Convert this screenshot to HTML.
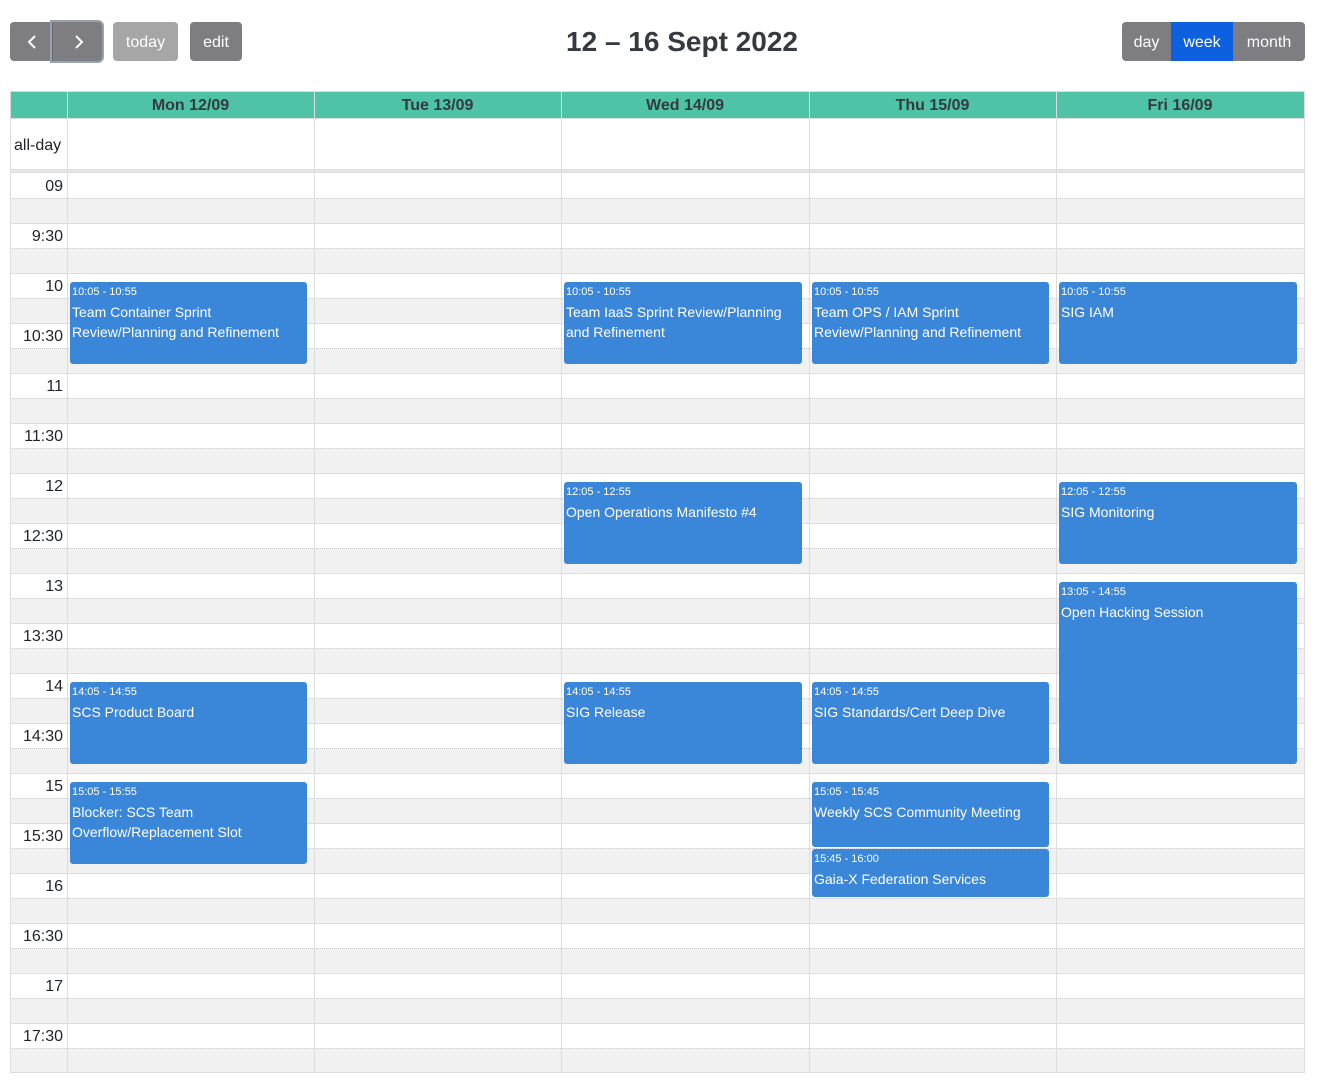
<!DOCTYPE html>
<html><head><meta charset="utf-8"><style>
*{box-sizing:border-box;margin:0;padding:0}
body{width:1322px;height:1085px;background:#fff;font-family:"Liberation Sans","DejaVu Sans",sans-serif;color:#212529;position:relative;overflow:hidden}
.btn{position:absolute;top:22px;height:39px;background:#7e7d82;color:#fff;font-size:16px;line-height:41px;text-align:center;border-radius:4px}
.abs{position:absolute}
.ev{position:absolute;background:#3a87d9;border:1px solid #3a87d9;border-radius:3px;color:#fff;padding:2px 1px;overflow:hidden}
.ev .t{font-size:11px;line-height:14px;margin-bottom:3px}
.ev .n{font-size:14px;line-height:20px}
.lbl{position:absolute;left:10px;width:53px;text-align:right;font-size:16px;color:#212529}
</style></head><body>
<div class="btn" style="left:10px;width:42px;border-radius:4px 0 0 4px"><svg width="42" height="39"><path d="M25 14 L19 20 L25 26" stroke="#fff" stroke-width="2" fill="none"/></svg></div>
<div class="btn" style="left:52px;width:50px;border-radius:0 4px 4px 0;box-shadow:0 0 0 2px #9aa3ad;border-left:1px solid #5f666d"><svg width="48" height="39"><path d="M22 14 L28 20 L22 26" stroke="#fff" stroke-width="2" fill="none"/></svg></div>
<div class="btn" style="left:113px;width:65px;background:#a6a6a7">today</div>
<div class="btn" style="left:190px;width:52px">edit</div>
<div class="abs" style="left:21px;width:1322px;top:22px;text-align:center;font-size:28px;font-weight:bold;color:#343a40;line-height:39px">12 – 16 Sept 2022</div>
<div class="btn" style="left:1122px;width:49px;border-radius:4px 0 0 4px">day</div>
<div class="btn" style="left:1171px;width:62px;border-radius:0;background:#0d61e0">week</div>
<div class="btn" style="left:1233px;width:72px;border-radius:0 4px 4px 0">month</div>

<div class="abs" style="left:10px;top:91px;width:1295px;height:28px;background:#4fc3a6;border:1px solid #ddd"></div>
<div class="abs" style="left:10px;top:119px;width:1295px;height:51px;border:1px solid #ddd;border-top:none"></div>
<div class="abs" style="left:14px;top:137px;font-size:16px">all-day</div>
<div class="abs" style="left:10px;top:169px;width:1295px;height:4px;background:#e6e6e6;border-top:1px solid #ddd;border-bottom:1px solid #ddd"></div>
<div id="grid"></div>
<script>
var cols=[67,314,561,809,1056,1304],names=["Mon 12/09","Tue 13/09","Wed 14/09","Thu 15/09","Fri 16/09"];
var h='';
for(var i=0;i<18;i++){var y=173+i*50;
h+='<div class="abs" style="left:10px;top:'+y+'px;width:1295px;height:50px;border-top:'+(i?'1px solid #ddd':'none')+'"></div>';
h+='<div class="abs" style="left:10px;top:'+(y+25)+'px;width:1295px;height:25px;background:#f1f1f1;border-top:1px dotted #ccc"></div>';
var hr=9+Math.floor(i/2),lab=(i%2)?hr+':30':(hr==9?'09':''+hr);
h+='<div class="lbl" style="top:'+(y+5)+'px">'+lab+'</div>';}
h+='<div class="abs" style="left:10px;top:173px;width:1295px;height:900px;border:1px solid #ddd;border-top:none"></div>';
for(var c=0;c<6;c++){h+='<div class="abs" style="left:'+cols[c]+'px;top:91px;width:1px;height:982px;background:#ddd"></div>';
if(c<5)h+='<div class="abs" style="left:'+cols[c]+'px;top:97px;width:'+(cols[c+1]-cols[c])+'px;text-align:center;font-size:16px;font-weight:bold;color:#343a40">'+names[c]+'</div>';}
function ev(c,s,e,t,n){var y1=173+s/30*50,y2=173+e/30*50;
h+='<div class="ev" style="left:'+(cols[c]+3)+'px;top:'+(y1+1)+'px;width:'+(cols[c+1]-cols[c]-10)+'px;height:'+(y2-y1-2)+'px"><div class="t">'+t+'</div><div class="n">'+n+'</div></div>';}
ev(0,65,115,'10:05 - 10:55','Team Container Sprint Review/Planning and Refinement');
ev(2,65,115,'10:05 - 10:55','Team IaaS Sprint Review/Planning and Refinement');
ev(3,65,115,'10:05 - 10:55','Team OPS / IAM Sprint Review/Planning and Refinement');
ev(4,65,115,'10:05 - 10:55','SIG IAM');
ev(2,185,235,'12:05 - 12:55','Open Operations Manifesto #4');
ev(4,185,235,'12:05 - 12:55','SIG Monitoring');
ev(4,245,355,'13:05 - 14:55','Open Hacking Session');
ev(0,305,355,'14:05 - 14:55','SCS Product Board');
ev(2,305,355,'14:05 - 14:55','SIG Release');
ev(3,305,355,'14:05 - 14:55','SIG Standards/Cert Deep Dive');
ev(0,365,415,'15:05 - 15:55','Blocker: SCS Team Overflow/Replacement Slot');
ev(3,365,405,'15:05 - 15:45','Weekly SCS Community Meeting');
ev(3,405,435,'15:45 - 16:00','Gaia-X Federation Services');
document.getElementById('grid').innerHTML=h;
</script>
</body></html>
